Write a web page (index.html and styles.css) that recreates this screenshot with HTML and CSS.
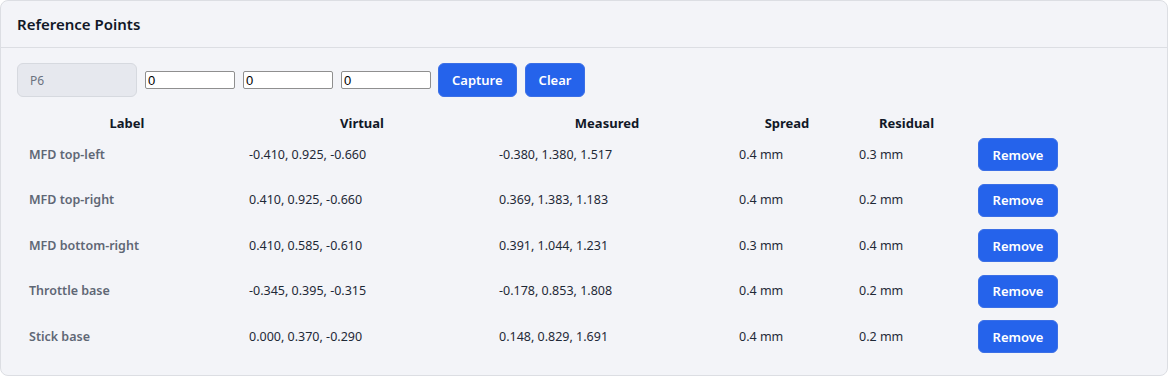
FILE: index.html
```html
<!DOCTYPE html>
<html lang="en">
<head>
    <meta charset="UTF-8">
    <meta name="viewport" content="width=device-width, initial-scale=1.0">
    <title>Reference Points</title>
    <link rel="stylesheet" href="styles.css">
</head>
<body>
    <div class="card">
        <div class="card-header">Reference Points</div>
        <div class="card-body">
            <div class="toolbar">
                <input type="text" class="point-name" value="P6" disabled />
                <input type="text" class="coord" value="0" />
                <input type="text" class="coord" value="0" />
                <input type="text" class="coord" value="0" />
                <button class="btn">Capture</button>
                <button class="btn">Clear</button>
            </div>
            <table class="points">
                <colgroup>
                    <col style="width: 220px">
                    <col style="width: 250px">
                    <col style="width: 240px">
                    <col style="width: 120px">
                    <col style="width: 119px">
                    <col>
                </colgroup>
                <thead>
                    <tr>
                        <th>Label</th>
                        <th>Virtual</th>
                        <th>Measured</th>
                        <th>Spread</th>
                        <th>Residual</th>
                        <th></th>
                    </tr>
                </thead>
                <tbody>
                    <tr>
                        <td class="label">MFD top-left</td>
                        <td>-0.410, 0.925, -0.660</td>
                        <td>-0.380, 1.380, 1.517</td>
                        <td>0.4 mm</td>
                        <td>0.3 mm</td>
                        <td><button class="btn">Remove</button></td>
                    </tr>
                    <tr>
                        <td class="label">MFD top-right</td>
                        <td>0.410, 0.925, -0.660</td>
                        <td>0.369, 1.383, 1.183</td>
                        <td>0.4 mm</td>
                        <td>0.2 mm</td>
                        <td><button class="btn">Remove</button></td>
                    </tr>
                    <tr>
                        <td class="label">MFD bottom-right</td>
                        <td>0.410, 0.585, -0.610</td>
                        <td>0.391, 1.044, 1.231</td>
                        <td>0.3 mm</td>
                        <td>0.4 mm</td>
                        <td><button class="btn">Remove</button></td>
                    </tr>
                    <tr>
                        <td class="label">Throttle base</td>
                        <td>-0.345, 0.395, -0.315</td>
                        <td>-0.178, 0.853, 1.808</td>
                        <td>0.4 mm</td>
                        <td>0.2 mm</td>
                        <td><button class="btn">Remove</button></td>
                    </tr>
                    <tr>
                        <td class="label">Stick base</td>
                        <td>0.000, 0.370, -0.290</td>
                        <td>0.148, 0.829, 1.691</td>
                        <td>0.4 mm</td>
                        <td>0.2 mm</td>
                        <td><button class="btn">Remove</button></td>
                    </tr>
                </tbody>
            </table>
        </div>
    </div>
</body>
</html>
```

FILE: styles.css
```css
body {
    margin: 0;
    background: #ffffff;
    font-family: 'Noto Sans', sans-serif;
    color: #111827;
}
.card {
    width: 1168px;
    height: 376px;
    box-sizing: border-box;
    background: #f3f4f8;
    border: 1px solid #dcdee3;
    border-radius: 8px;
}
.card-header {
    height: 47px;
    box-sizing: border-box;
    padding: 0 16px;
    display: flex;
    align-items: center;
    font-size: 15px;
    font-weight: 600;
    border-bottom: 1px solid #dcdee3;
}
.card-body {
    padding: 15px 16px 10px 16px;
}
.toolbar {
    display: flex;
    align-items: center;
    gap: 8px;
}
.point-name {
    width: 120px;
    height: 34px;
    box-sizing: border-box;
    padding: 0 12px;
    background: #e6e8ee;
    border: 1px solid #d6d9df;
    border-radius: 6px;
    font-family: inherit;
    font-size: 12px;
    color: #6b7280;
}
.coord {
    width: 90px;
    height: 18px;
    box-sizing: border-box;
    padding: 0 2px;
    border: 1px solid #8f8f8f;
    border-radius: 2px;
    background: #ffffff;
    font-family: 'Liberation Sans', sans-serif;
    font-size: 13px;
}
.btn {
    height: 34px;
    padding: 0 13px;
    border: 1px solid #3b6fe6;
    border-radius: 6px;
    background: #2563eb;
    color: #ffffff;
    font-family: inherit;
    font-size: 13px;
    font-weight: 600;
}
.coord + .btn {
    margin-left: -1px;
}
.points {
    margin-top: 18px;
    width: 1134px;
    table-layout: fixed;
    border-collapse: collapse;
    font-size: 12.5px;
}
.points th {
    padding: 0 12px;
    font-size: 13px;
    font-weight: 700;
    color: #111827;
    text-align: center;
    line-height: 17px;
}
.points td {
    padding: 6px 12px;
    height: 33.5px;
    color: #1f2937;
    line-height: 18px;
}
.points td.label {
    color: #5f6775;
    font-weight: 600;
}
.points td .btn {
    width: 80px;
    height: 33px;
    padding: 0;
}
```
